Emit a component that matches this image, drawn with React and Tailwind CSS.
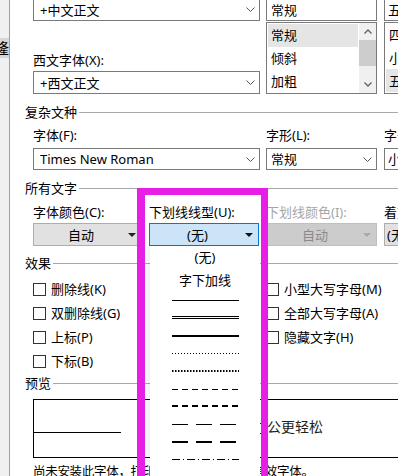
import React from "react";

function Chevron() {
    return (
        <svg width="9" height="5" viewBox="0 0 9 5" className="shrink-0">
            <path d="M0.5 0.5L4.5 4.5L8.5 0.5" fill="none" stroke="#555" strokeWidth="1" />
        </svg>
    );
}

function Tri({ color }) {
    return (
        <svg width="8" height="4" viewBox="0 0 8 4" className="shrink-0">
            <path d="M0 0H8L4 4Z" fill={color} />
        </svg>
    );
}

function Combo({ text, className, chevron = true }) {
    return (
        <div className={`flex items-center border border-[#7a7a7a] bg-white pl-[6px] pr-[4px] ${className}`}>
            <span className="flex-1 whitespace-nowrap overflow-hidden">{text}</span>
            {chevron && <Chevron />}
        </div>
    );
}

function Group({ title, className }) {
    return (
        <div className={`flex items-center h-[16px] pl-[15px] ${className}`}>
            <span className="whitespace-nowrap">{title}</span>
            <div className="flex-1 h-px bg-[#a8a8a8] ml-[2px]" />
        </div>
    );
}

function Check({ label }) {
    return (
        <div className="flex items-center h-[24px]">
            <div className="w-[13px] h-[13px] border border-[#333] bg-white shrink-0" />
            <span className="ml-[5px] whitespace-nowrap">{label}</span>
        </div>
    );
}

function ListBox({ items, selected, scrollbar }) {
    return (
        <div className="mt-[1px] h-[72px] border border-[#7a7a7a] bg-white flex">
            <div className="flex-1 p-px flex flex-col">
                {items.map((it, i) => (
                    <div
                        key={it}
                        className={`h-[23px] flex items-center pl-[3px] ${i === selected ? "bg-[#e5e5e5]" : ""}`}
                    >
                        {it}
                    </div>
                ))}
            </div>
            {scrollbar && (
                <div className="w-[17px] bg-[#f0f0f0] flex flex-col">
                    <div className="h-[17px] flex items-center justify-center">
                        <svg width="8" height="5" viewBox="0 0 8 5">
                            <path d="M0.5 4.5L4 1L7.5 4.5" fill="none" stroke="#606060" strokeWidth="1.3" />
                        </svg>
                    </div>
                    <div className="h-[26px] bg-[#cdcdcd]" />
                    <div className="flex-1" />
                    <div className="h-[17px] flex items-center justify-center">
                        <svg width="8" height="5" viewBox="0 0 8 5">
                            <path d="M0.5 0.5L4 4L7.5 0.5" fill="none" stroke="#606060" strokeWidth="1.3" />
                        </svg>
                    </div>
                </div>
            )}
        </div>
    );
}

const LINES = [
    { w: 1 },
    { double: true },
    { w: 2 },
    { w: 1, dash: "1 2" },
    { w: 2, dash: "1.5 1.5" },
    { w: 1, dash: "6 4" },
    { w: 2, dash: "6 4" },
    { w: 1, dash: "16 8" },
    { w: 2, dash: "16 8" },
    { w: 1, dash: "8 3 1 3" },
    { w: 2, dash: "8 3 2 3" },
];

function LineSample({ line }) {
    return (
        <div className="h-[18px] flex items-center justify-center">
            <svg width="67" height="6" viewBox="0 0 67 6">
                {line.double ? (
                    <>
                        <line x1="0" y1="1.5" x2="67" y2="1.5" stroke="#000" strokeWidth="1" />
                        <line x1="0" y1="3.5" x2="67" y2="3.5" stroke="#000" strokeWidth="1" />
                    </>
                ) : (
                    <line
                        x1="0"
                        y1={line.w === 1 ? 3.5 : 3}
                        x2="67"
                        y2={line.w === 1 ? 3.5 : 3}
                        stroke="#000"
                        strokeWidth={line.w}
                        strokeDasharray={line.dash}
                    />
                )}
            </svg>
        </div>
    );
}

export default function App() {
    return (
        <div className="relative w-[398px] h-[476px] overflow-hidden bg-white flex text-[13px] leading-[16px] text-black font-['Noto_Sans','Noto_Sans_CJK_SC',sans-serif]">
            {/* edge of the window behind */}
            <div className="w-[10px] shrink-0 bg-[#f0f0f0] border-r border-[#a0a0a0] flex flex-col">
                <div className="mt-[38px] h-[20px] bg-[#d6d6d6] overflow-hidden">
                    <span className="block -ml-[6px] text-[15px] leading-[20px]">隆</span>
                </div>
            </div>

            <div className="flex-1 flex flex-col min-w-0">
                {/* 中文字体 / 字形 / 字号 */}
                <div className="flex pl-[23px] -mt-[2px]">
                    <div className="w-[227px] shrink-0 flex flex-col">
                        <Combo text="+中文正文" className="h-[23px]" />
                        <div className="mt-[31px] h-[16px]">西文字体(X):</div>
                        <Combo text="+西文正文" className="mt-[3px] h-[23px]" />
                    </div>
                    <div className="w-[111px] ml-[6px] shrink-0 flex flex-col">
                        <div className="h-[23px] border border-[#7a7a7a] flex items-center pl-[4px]">常规</div>
                        <ListBox items={["常规", "倾斜", "加粗"]} selected={0} scrollbar />
                    </div>
                    <div className="w-[80px] ml-[7px] shrink-0 flex flex-col">
                        <div className="h-[23px] border border-[#7a7a7a] flex items-center pl-[3px]">五号</div>
                        <ListBox items={["四号", "小四", "五号"]} selected={2} />
                    </div>
                </div>

                <Group title="复杂文种" className="mt-[10px]" />
                <div className="flex pl-[23px] mt-[7px] h-[16px] whitespace-nowrap">
                    <div className="w-[227px] shrink-0">字体(F):</div>
                    <div className="w-[111px] ml-[6px] shrink-0">字形(L):</div>
                    <div className="ml-[7px]">字号(Z):</div>
                </div>
                <div className="flex pl-[23px] mt-[5px]">
                    <Combo text="Times New Roman" className="w-[227px] shrink-0 h-[22px]" />
                    <Combo text="常规" className="w-[111px] ml-[6px] shrink-0 h-[22px] !pl-[4px]" />
                    <Combo text="小四" className="w-[80px] ml-[7px] shrink-0 h-[22px] !pl-[3px]" chevron={false} />
                </div>

                <Group title="所有文字" className="mt-[10px]" />
                <div className="flex pl-[23px] mt-[8px] h-[16px] whitespace-nowrap">
                    <div className="w-[108px] shrink-0">字体颜色(C):</div>
                    <div className="w-[110px] ml-[8px] shrink-0">下划线线型(U):</div>
                    <div className="w-[111px] ml-[7px] shrink-0 text-[#a6a6a6]">下划线颜色(I):</div>
                    <div className="ml-[7px]">着重号(·):</div>
                </div>
                <div className="flex pl-[23px] mt-[3px]">
                    <div className="w-[108px] h-[23px] shrink-0 bg-[#e1e1e1] border border-[#adadad] flex items-center pr-[4px]">
                        <span className="flex-1 text-center">自动</span>
                        <Tri color="#222" />
                    </div>
                    <div className="w-[110px] h-[23px] ml-[8px] shrink-0 bg-[#cce4f7] border border-[#0078d7] flex items-center pr-[5px]">
                        <span className="flex-1 text-center">(无)</span>
                        <Tri color="#111" />
                    </div>
                    <div className="w-[111px] h-[23px] ml-[7px] shrink-0 bg-[#cccccc] border border-[#bfbfbf] flex items-center pr-[5px] text-[#8a8a8a]">
                        <span className="flex-1 text-center">自动</span>
                        <Tri color="#a8a8a8" />
                    </div>
                    <div className="w-[80px] h-[23px] ml-[7px] shrink-0 bg-[#e1e1e1] border border-[#adadad] flex items-center pl-[2px]">
                        (无)
                    </div>
                </div>

                <Group title="效果" className="mt-[9px]" />
                <div className="flex pl-[23px] mt-[6px]">
                    <div className="w-[233px] shrink-0 flex flex-col">
                        <Check label="删除线(K)" />
                        <Check label="双删除线(G)" />
                        <Check label="上标(P)" />
                        <Check label="下标(B)" />
                    </div>
                    <div className="flex flex-col">
                        <Check label="小型大写字母(M)" />
                        <Check label="全部大写字母(A)" />
                        <Check label="隐藏文字(H)" />
                    </div>
                </div>

                <Group title="预览" className="mt-[2px]" />
                <div className="ml-[23px] mt-[8px] w-[380px] h-[59px] shrink-0 border border-black flex items-start">
                    <div className="mt-[32px] w-[87px] h-px bg-black shrink-0" />
                    <span className="ml-[118px] mt-[20px] text-[14px] leading-[14px] text-[#222] whitespace-nowrap">
                        让办公更轻松
                    </span>
                </div>
                <div className="pl-[23px] mt-[6px] text-[12.5px] tracking-[-0.3px] whitespace-nowrap">
                    尚未安装此字体，打印时将采用最相近的有效字体。
                </div>
            </div>

            {/* open underline-style list */}
            <div className="absolute left-[150px] top-[246px] w-[110px] h-[240px] bg-white shadow-[-3px_0_3px_rgba(0,0,0,0.06)] flex flex-col">
                <div className="h-[23px] flex items-center justify-center">(无)</div>
                <div className="h-[23px] flex items-center justify-center">字下加线</div>
                {LINES.map((l, i) => (
                    <LineSample key={i} line={l} />
                ))}
            </div>

            {/* highlight frame */}
            <div className="absolute left-[137px] top-[188px] w-[131px] h-[300px] border-l-[8px] border-r-[7px] border-t-[7px] border-b-0 border-[#e61ee6]" />
        </div>
    );
}
